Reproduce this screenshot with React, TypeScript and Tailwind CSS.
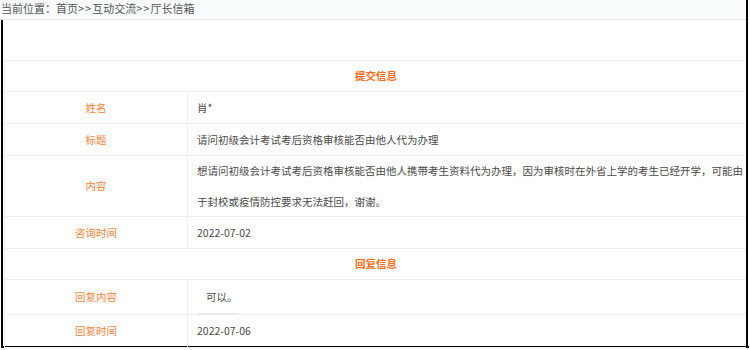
import React from "react";

const font = { fontFamily: '"Noto Sans CJK SC", "Noto Sans", sans-serif' };

function Row({ label, children, h }: { label: string; children: React.ReactNode; h: string }) {
  return (
    <div className={`flex border-b border-[#efefef] ${h}`}>
      <div className="w-[183px] shrink-0 border-r border-[#efefef] flex items-center justify-center text-[#ff7f35] text-[10.5px]">
        {label}
      </div>
      <div className="flex-1 flex items-center pl-[9px] pr-[4px] text-[#4a4a4a] text-[10.5px]">{children}</div>
    </div>
  );
}

export default function App() {
  return (
    <div className="w-[750px] h-[350px] bg-white relative overflow-hidden" style={font}>
      <div className="h-[20px] bg-[#f9fcfd] border-b border-[#e6e6e6] text-[11px] leading-[17px] text-[#555] pl-[1px]">
        当前位置：首页<span className="tracking-[1px]">&gt;&gt;</span>互动交流<span className="tracking-[1px]">&gt;&gt;</span>厅长信箱
      </div>
      <div className="absolute top-0 right-[2px] w-[2px] h-[348px] bg-black" />
      <div className="border-l-2 border-b-2 border-black h-[328px] w-[748px] ml-[1px] mr-[1px]">
        <div className="h-[40px]" />
        <div className="ml-[1px] mr-[1px] border-t border-l border-r border-[#efefef]">
          <div className="h-[31px] border-b border-[#efefef] flex items-center justify-center text-[#ff6a13] text-[10.5px] font-bold">
            提交信息
          </div>
          <Row label="姓名" h="h-[32px]">肖*</Row>
          <Row label="标题" h="h-[32px]">请问初级会计考试考后资格审核能否由他人代为办理</Row>
          <Row label="内容" h="h-[61px]">
            <div className="leading-[31px]">
              想请问初级会计考试考后资格审核能否由他人携带考生资料代为办理，因为审核时在外省上学的考生已经开学，可能由于封校或疫情防控要求无法赶回，谢谢。
            </div>
          </Row>
          <Row label="咨询时间" h="h-[32px]">2022-07-02</Row>
          <div className="h-[31px] border-b border-[#efefef] flex items-center justify-center text-[#ff6a13] text-[10.5px] font-bold">
            回复信息
          </div>
          <Row label="回复内容" h="h-[35px]">
            <div className="h-full flex items-center pl-[9px] border-b border-[#e8e8e8] w-[40px] whitespace-nowrap">可以。</div>
          </Row>
          <Row label="回复时间" h="h-[33px]">2022-07-06</Row>
        </div>
      </div>
    </div>
  );
}
